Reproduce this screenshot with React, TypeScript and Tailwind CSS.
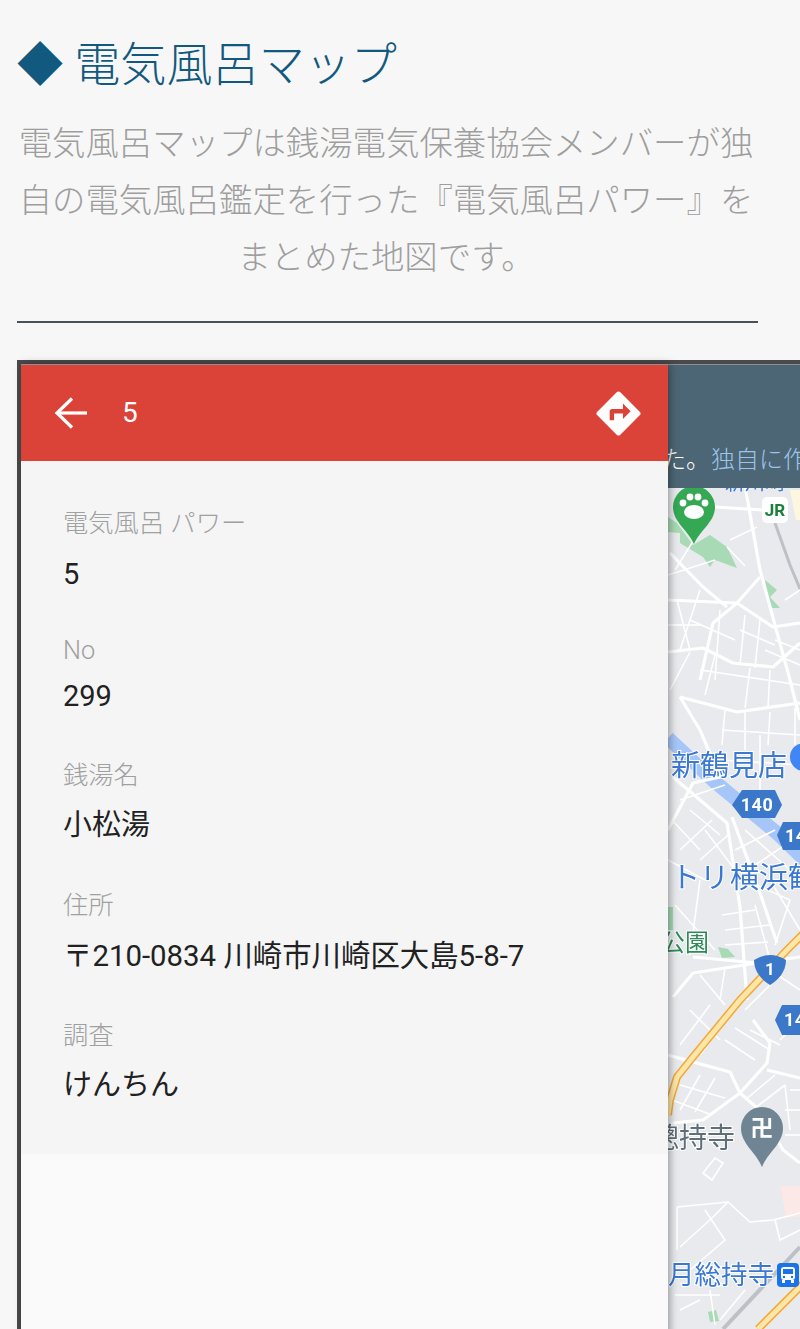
const fields = [
  { label: '電気風呂 パワー', value: '5', box: 'mt-0', gap: 'mt-[14px] text-[29px]' },
  { label: 'No', value: '299', box: 'mt-[41px]', gap: 'mt-[9px] text-[29px]' },
  { label: '銭湯名', value: '小松湯', box: 'mt-[44px]', gap: 'mt-[13px] text-[29px]' },
  { label: '住所', value: '〒210-0834 川崎市川崎区大島5-8-7', box: 'mt-[45px]', gap: 'mt-[14px] text-[29.4px]' },
  { label: '調査', value: 'けんちん', box: 'mt-[44px]', gap: 'mt-[13px] text-[29px]' },
]

// big roads
const roads = [
  'M745 486 L760 570 L775 625 L790 680 L800 720',
  'M668 600 L737 603 L773 627 L800 623',
  'M668 652 L703 648 L733 663 L773 667 L800 643',
  'M700 680 L713 623 L737 603 L760 577',
  'M670 553 L703 587 L727 607',
  'M680 697 L737 712 L800 703',
  'M680 697 L700 730 L720 777',
  'M668 830 L693 783 L720 777',
  'M673 777 L727 823 L740 907 L747 1000',
  'M732 817 L760 893 L777 943',
  'M693 957 L757 963 L800 957',
  'M673 997 L693 973 L757 963',
  'M668 1055 L693 1062 L730 1072 L740 1093 L763 1113 L783 1150 L800 1163',
  'M770 1043 L767 1063 L740 1093 L703 1120 L673 1123',
  'M753 1020 L770 1043',
  'M767 1070 L800 1078',
  'M715 507 L763 510',
]

// small streets
const streets = [
  'M730 540 L757 527', 'M727 547 L745 566', 'M675 570 L700 530', 'M668 575 L715 560', 'M677 600 L690 650',
  'M700 590 L680 650', 'M720 610 L715 680', 'M745 615 L740 665', 'M760 620 L755 668', 'M690 620 L735 640',
  'M668 625 L700 625', 'M740 630 L775 645', 'M775 640 L800 650', 'M785 600 L800 590', 'M765 650 L800 665',
  'M690 652 L670 690', 'M715 655 L705 695', 'M750 668 L745 708', 'M770 670 L768 708', 'M700 670 L800 685',
  'M725 710 L722 745', 'M745 712 L745 750', 'M770 712 L768 745', 'M795 708 L795 745', 'M722 730 L800 735',
  'M720 760 L800 765', 'M760 735 L760 790', 'M680 800 L725 785', 'M672 820 L700 850', 'M690 810 L720 835',
  'M680 850 L712 820', 'M700 860 L728 835', 'M668 860 L705 880', 'M705 830 L735 870', 'M745 830 L790 870',
  'M735 850 L775 830', 'M755 865 L785 845', 'M745 880 L790 900', 'M700 880 L690 955', 'M675 905 L715 950',
  'M722 915 L755 910', 'M725 930 L770 925', 'M725 945 L768 942', 'M755 905 L770 960', 'M770 880 L800 930',
  'M790 900 L775 945', 'M770 970 L800 990', 'M700 975 L725 1005', 'M725 968 L720 1000', 'M770 985 L745 1010',
  'M690 1010 L720 1040', 'M710 1005 L680 1045', 'M730 1015 L700 1055', 'M750 1030 L780 1045', 'M725 1040 L755 1060',
  'M735 1028 L770 1050', 'M780 1040 L800 1020', 'M700 1075 L680 1110', 'M715 1078 L695 1112', 'M680 1085 L725 1098',
  'M672 1100 L712 1115', 'M745 1100 L775 1075', 'M755 1108 L785 1085', 'M785 1085 L790 1130', 'M790 1090 L800 1090',
  'M785 1110 L800 1110', 'M785 1135 L800 1135', 'M703 1173 L712 1180 L723 1163 L715 1158 Z', 'M677 1207 L677 1250',
  'M677 1207 L728 1202 L750 1222 L773 1220 L800 1213', 'M680 1247 L713 1217 L728 1202', 'M705 1210 L725 1240 L690 1270',
  'M775 1220 L780 1240 L800 1230', 'M675 1295 L720 1295', 'M710 1290 L715 1325', 'M680 1310 L700 1300', 'M745 1290 L720 1320',
]

function MapLayer() {
  return (
    <svg viewBox="668 488 145 841" className="block w-[145px] h-[841px] blur-[0.4px] bg-[#e8eaed]" style={{ fontFamily: "'Noto Sans CJK JP', sans-serif" }}>
      <path d="M668 517 L677 523 L693 545 L710 535 L727 547 L737 568 L715 560 L710 567 L703 557 L680 543 L680 533 L668 532Z" fill="#a8dab5" />
      <path d="M765 580 L777 590 L770 597 L780 608 L772 608 L767 593Z" fill="#a8dab5" />
      <path d="M668 907 L673 907 L673 930 L668 930Z" fill="#a8dab5" />
      <path d="M718 947 L728 949 L735 957 L722 958Z" fill="#a8dab5" />
      <path d="M708 1312 L716 1310 L719 1321 L710 1322Z" fill="#a8dab5" />
      <path d="M780 1186 L800 1186 L800 1217 L786 1217Z" fill="#fce8e6" />
      <path d="M790 490 L813 490 L813 520 L796 520Z" fill="#fef7e0" />

      <path d="M668 738 L715 782 L777 833 L813 868" fill="none" stroke="#a6c6f9" strokeWidth="14" />

      <path d="M775 523 L790 565 L813 620" fill="none" stroke="#bdc1c6" strokeWidth="3" />
      <path d="M723 1329 L800 1247" fill="none" stroke="#bdc1c6" strokeWidth="4" />

      {streets.map((d) => (
        <path key={d} d={d} fill="none" stroke="#fff" strokeWidth="1.6" />
      ))}
      {roads.map((d) => (
        <path key={d} d={d} fill="none" stroke="#fff" strokeWidth="3.2" strokeLinejoin="round" />
      ))}

      <g fill="none" strokeLinejoin="round">
        <path d="M813 924 L787 950 L740 1000 L693 1057 L677 1077 L670 1100 L668 1115" stroke="#f2a93b" strokeWidth="8" />
        <path d="M813 924 L787 950 L740 1000 L693 1057 L677 1077 L670 1100 L668 1115" stroke="#fde6a8" strokeWidth="5" />
        <path d="M758 1329 L813 1274" stroke="#f2a93b" strokeWidth="8" />
        <path d="M758 1329 L813 1274" stroke="#fde6a8" strokeWidth="5" />
      </g>

      {/* green pin with paw */}
      <path d="M694 486 A21 21 0 0 1 715 507 C715 522 700 530 694 544 C688 530 673 522 673 507 A21 21 0 0 1 694 486Z" fill="#34a853" />
      <g fill="#fff">
        <ellipse cx="694" cy="512" rx="10" ry="7" />
        <circle cx="683" cy="503" r="3.4" />
        <circle cx="690" cy="497" r="3.4" />
        <circle cx="698" cy="497" r="3.4" />
        <circle cx="705" cy="503" r="3.4" />
      </g>

      {/* JR */}
      <rect x="762" y="497" width="26" height="26" rx="5" fill="#fff" />
      <text x="775" y="516" textAnchor="middle" fontSize="17" fontWeight="700" fill="#188038" fontFamily="Roboto, sans-serif">JR</text>

      <text x="725" y="490" fontSize="20" fill="#3b78d0">新川崎</text>

      <circle cx="804" cy="757" r="14" fill="#4285f4" />
      <text x="671" y="776" fontSize="29" fill="#3b78d0" stroke="#fff" strokeWidth="2" paintOrder="stroke">新鶴見店</text>

      <path d="M732 805 L742 790 L775 790 L782 805 L775 818 L742 818Z" fill="#3b78c9" />
      <text x="757" y="811" textAnchor="middle" fontSize="18" letterSpacing="0.5" fontWeight="700" fill="#fff" fontFamily="Roboto, sans-serif">140</text>
      <path d="M777 835 L783 822 L813 822 L813 850 L783 850Z" fill="#3b78c9" />
      <text x="785" y="842" fontSize="18" letterSpacing="0.5" fontWeight="700" fill="#fff" fontFamily="Roboto, sans-serif">140</text>

      <text x="671" y="888" fontSize="29" fill="#3b78d0" stroke="#fff" strokeWidth="2" paintOrder="stroke">トリ</text>
      <text x="730" y="888" fontSize="29" fill="#3b78d0" stroke="#fff" strokeWidth="2" paintOrder="stroke">横浜鶴</text>

      <text x="661" y="951" fontSize="24" fill="#2e8b57" stroke="#fff" strokeWidth="2" paintOrder="stroke">公園</text>

      <path d="M754 960 Q770 950 786 960 C786 972 778 980 770 985 C762 980 754 972 754 960Z" fill="#3b78c9" />
      <text x="770" y="975" textAnchor="middle" fontSize="17" fontWeight="700" fill="#fff" fontFamily="Roboto, sans-serif">1</text>

      <path d="M775 1020 L782 1005 L813 1005 L813 1035 L782 1035Z" fill="#3b78c9" />
      <text x="784" y="1026" fontSize="18" letterSpacing="0.5" fontWeight="700" fill="#fff" fontFamily="Roboto, sans-serif">140</text>

      {/* temple pin */}
      <path d="M762 1107 A21 21 0 0 1 783 1128 C783 1144 768 1152 762 1167 C756 1152 741 1144 741 1128 A21 21 0 0 1 762 1107Z" fill="#6f8593" />
      <text x="762" y="1136" textAnchor="middle" fontSize="23" fontWeight="700" fill="#fff">卍</text>
      <text x="735" y="1148" textAnchor="end" fontSize="28" fill="#5f6f7a" stroke="#fff" strokeWidth="2" paintOrder="stroke">總持寺</text>

      <text x="668" y="1284" fontSize="26.5" fill="#3b78d0" stroke="#fff" strokeWidth="2" paintOrder="stroke">月総持寺</text>
      <rect x="777" y="1263" width="22" height="24" rx="4" fill="#1a73e8" />
      <rect x="781" y="1267" width="14" height="13" rx="3" fill="#fff" />
      <rect x="783" y="1269" width="10" height="5" fill="#1a73e8" />
      <circle cx="784" cy="1277" r="1.2" fill="#1a73e8" />
      <circle cx="792" cy="1277" r="1.2" fill="#1a73e8" />
      <rect x="782" y="1280" width="3" height="3" fill="#fff" />
      <rect x="791" y="1280" width="3" height="3" fill="#fff" />
    </svg>
  )
}

export default function App() {
  return (
    <div className="h-[1329px] overflow-hidden bg-[#f7f7f7] font-['Noto_Sans_CJK_JP',sans-serif]">
      <div className="pt-[28px] px-[17px] w-[775px]">
        <h2 className="text-[46.1px] leading-[66px] font-light text-[#12597f] whitespace-nowrap">
          <span className="mr-[1px]">◆</span> 電気風呂マップ
        </h2>
        {/* intro */}
        <p className="mt-[18px] mr-[3px] text-[33.4px] leading-[57px] font-light text-[#9e9e9e] text-center">
          電気風呂マップは銭湯電気保養協会メンバーが独自の電気風呂鑑定を行った『電気風呂パワー』をまとめた地図です。
        </p>
        <div className="mt-[38px] h-[2px] w-[741px] bg-[#4a5058]"></div>
      </div>

      <div className="mt-[37px] ml-[17px] w-[800px] h-[1000px] border-4 border-[#4a4a4a] flex">
        <div className="relative z-10 w-[647px] shrink-0 flex flex-col bg-[#fafafa] shadow-[2px_0_8px_rgba(0,0,0,0.35)] font-['Roboto','Noto_Sans_CJK_JP',sans-serif]">
          <div className="h-[97px] shrink-0 bg-[#dc4338] border-t border-[#8f8f8f] flex items-center justify-between pl-[32px] pr-[23px] text-white">
            <div className="flex items-center gap-[33px]">
              <svg width="36" height="34" viewBox="0 0 36 34" fill="none" stroke="#fff" strokeWidth="3.2">
                <path d="M34 17 H4" />
                <path d="M19 2.5 L4 17 L19 31.5" />
              </svg>
              <span className="text-[28px] leading-none">5</span>
            </div>
            <svg width="53" height="53" viewBox="0 0 24 24" fill="#fff">
              <path d="M21.71 11.29l-9-9c-.39-.39-1.02-.39-1.41 0l-9 9c-.39.39-.39 1.02 0 1.41l9 9c.39.39 1.02.39 1.41 0l9-9c.39-.38.39-1.01 0-1.41zM14 14.5V12h-4v3H8v-4c0-.55.45-1 1-1h5V7.5l3.5 3.5-3.5 3.5z" />
            </svg>
          </div>
          <div className="h-[693px] shrink-0 bg-[#f5f5f5] pt-[45px] pl-[42px]">
            {fields.map((f) => (
              <div key={f.label} className={f.box}>
                <div className="h-[36px] leading-[36px] text-[25.3px] font-light text-[#a0a0a0]">{f.label}</div>
                <div className={`h-[36px] leading-[36px] text-[#212121] ${f.gap}`}>{f.value}</div>
              </div>
            ))}
          </div>
        </div>

        <div className="flex-1 min-w-0 flex flex-col">
          <div className="h-[124px] shrink-0 bg-[#4d6675] border-t border-[#8f8f8f] overflow-hidden flex items-end pb-[12px]">
            <span className="-ml-[6px] whitespace-nowrap text-[24px] leading-[36px] text-white font-light">
              た。<span className="ml-[1px] text-[#9cc4e8]">独自に作成した</span>
            </span>
          </div>
          <MapLayer />
        </div>
      </div>
    </div>
  )
}
